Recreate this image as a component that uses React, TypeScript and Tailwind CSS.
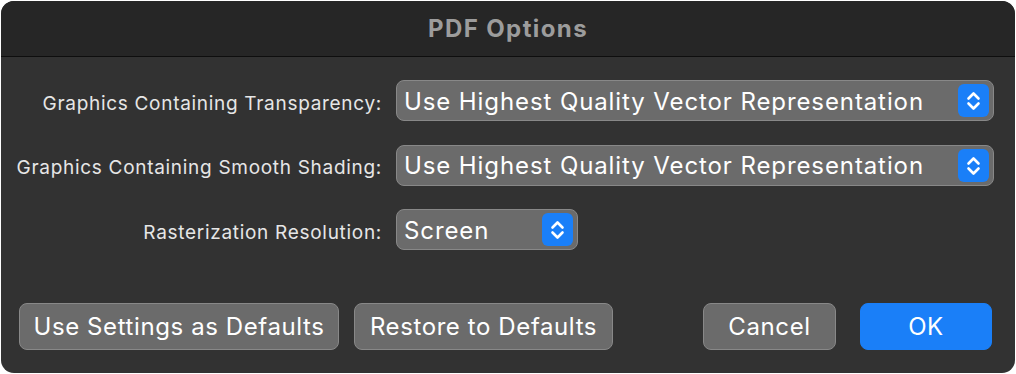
import React from 'react';

const font = { fontFamily: 'Inter, "Noto Sans", sans-serif' };

const Stepper: React.FC = () => (
  <div className="w-[31px] h-[33px] rounded-[6px] bg-[#1a7ff8] flex items-center justify-center">
    <svg width="31" height="33" viewBox="0 0 31 33" fill="none">
      <path d="M10.5 14.5 L15.5 9.5 L20.5 14.5" stroke="white" strokeWidth="2.6" strokeLinecap="round" strokeLinejoin="round" />
      <path d="M10.5 19.5 L15.5 24.5 L20.5 19.5" stroke="white" strokeWidth="2.6" strokeLinecap="round" strokeLinejoin="round" />
    </svg>
  </div>
);

interface PopupProps {
  value: string;
  className?: string;
}

const Popup: React.FC<PopupProps> = ({ value, className }) => (
  <div
    className={`h-[41px] rounded-[8px] bg-[#6b6b6b] border border-[#888888] flex items-center justify-between pl-[7px] pr-[4px] ${className ?? ''}`}
  >
    <span className="text-[24px] text-white leading-none tracking-[0.9px] pt-[2px]">{value}</span>
    <Stepper />
  </div>
);

const Row: React.FC<{ label: string; children: React.ReactNode }> = ({ label, children }) => (
  <div className="grid grid-cols-[381px_1fr] gap-[14px] items-center">
    <div className="text-right text-[19px] text-[#e6e6e6] tracking-[0.7px] pt-[7px]">{label}</div>
    <div className="flex">{children}</div>
  </div>
);

const Button: React.FC<{ label: string; className: string; primary?: boolean }> = ({ label, className, primary }) => (
  <button
    className={`h-[47px] rounded-[8px] text-[24px] tracking-[0.6px] text-white flex items-center justify-center ${
      primary ? 'bg-[#1a7ff8] border border-[#1a7ff8]' : 'bg-[#6b6b6b] border border-[#888888]'
    } ${className}`}
  >
    {label}
  </button>
);

export default function App() {
  return (
    <div className="w-[1016px] h-[374px] bg-white p-px" style={font}>
      <div className="w-full h-full rounded-[13px] bg-[#323232] overflow-hidden flex flex-col">
        <div className="h-[56px] bg-[#262626] border-b border-[#0e0e0e] flex items-center justify-center">
          <span className="text-[24px] font-bold text-[#9c9c9c] tracking-[1.4px]">PDF Options</span>
        </div>
        <div className="flex-1 flex flex-col pt-[23px] pr-[21px]">
          <div className="flex flex-col gap-[23.5px]">
            <Row label="Graphics Containing Transparency:">
              <Popup value="Use Highest Quality Vector Representation" className="flex-1" />
            </Row>
            <Row label="Graphics Containing Smooth Shading:">
              <Popup value="Use Highest Quality Vector Representation" className="flex-1" />
            </Row>
            <Row label="Rasterization Resolution:">
              <Popup value="Screen" className="w-[182px]" />
            </Row>
          </div>
          <div className="mt-auto mb-[23px] flex items-center pl-[18px] pr-[2px]">
            <Button label="Use Settings as Defaults" className="w-[320px]" />
            <Button label="Restore to Defaults" className="w-[259px] ml-[15px]" />
            <div className="flex-1" />
            <Button label="Cancel" className="w-[133px]" />
            <Button label="OK" className="w-[132px] ml-[24px]" primary />
          </div>
        </div>
      </div>
    </div>
  );
}
